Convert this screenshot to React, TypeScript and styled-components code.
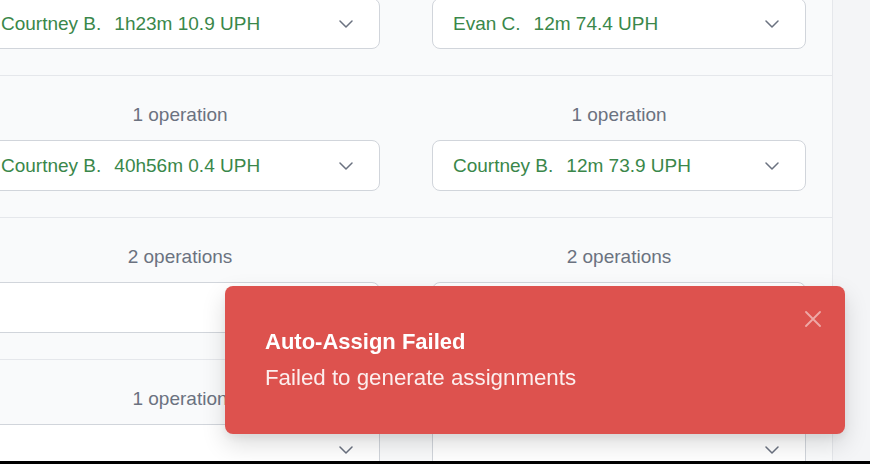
import React from "react";
import styled, { createGlobalStyle } from "styled-components";

const GlobalStyle = createGlobalStyle`
  html, body {
    margin: 0;
    padding: 0;
    overflow: hidden;
  }
  body {
    font-family: "Liberation Sans", Arial, Helvetica, sans-serif;
    -webkit-font-smoothing: antialiased;
  }
  * { box-sizing: border-box; }
`;

const Frame = styled.div`
  width: 870px;
  height: 464px;
  display: flex;
  flex-direction: column;
  overflow: hidden;
`;

const Viewport = styled.div`
  flex: 1;
  min-height: 0;
  overflow: hidden;
  background: #f4f5f7;
`;

const BottomEdge = styled.div`
  height: 3px;
  flex: none;
  background: #000;
`;

const Panel = styled.div`
  margin: -66px 0 0 -46px;
  width: 879px;
  background: #f9fafb;
  border-right: 1px solid #e5e7eb;
`;

const Row = styled.div`
  display: grid;
  grid-template-columns: 452px 426px;
  border-bottom: 1px solid #e5e7eb;
`;

const Cell = styled.div`
  display: flex;
  flex-direction: column;
  padding: 25px 26px 26px;
`;

const OpLabel = styled.div`
  text-align: center;
  font-size: 19px;
  height: 28px;
  line-height: 28px;
  color: #6b7280;
  margin-bottom: 11px;
  white-space: nowrap;
`;

const Select = styled.div`
  height: 51px;
  display: flex;
  align-items: center;
  justify-content: space-between;
  padding: 0 26px 0 20px;
  background: #fff;
  border: 1px solid #d1d5db;
  border-radius: 8px;
`;

const Assignee = styled.div`
  font-size: 19px;
  color: #3a874a;
  white-space: nowrap;
`;

const Stats = styled.span`
  margin-left: 13px;
`;

const Chevron = styled.svg`
  flex: none;
  width: 14px;
  height: 8px;
  color: #6b7280;
`;

const Toast = styled.div`
  position: fixed;
  right: 25px;
  bottom: 30px;
  width: 620px;
  height: 148px;
  padding: 41px 40px 40px;
  background: #dd524e;
  border-radius: 8px;
  box-shadow: 0 10px 25px rgba(0, 0, 0, 0.14), 0 4px 10px rgba(0, 0, 0, 0.06);
  color: #fff;
`;

const ToastTitle = styled.div`
  font-size: 22px;
  line-height: 29px;
  font-weight: 700;
  margin-bottom: 7px;
`;

const ToastMessage = styled.div`
  font-size: 22.3px;
  line-height: 30px;
  color: rgba(255, 255, 255, 0.9);
`;

const CloseButton = styled.button`
  position: absolute;
  top: 25px;
  right: 24px;
  width: 16px;
  height: 16px;
  padding: 0;
  border: 0;
  background: transparent;
  color: rgba(255, 255, 255, 0.5);
  display: flex;
  cursor: pointer;
`;

type Assignment = { name: string; time: string; uph: string } | null;

type RowData = {
  labels: [string, string];
  cells: [Assignment, Assignment];
};

const rows: RowData[] = [
  {
    labels: ["", ""],
    cells: [
      { name: "Courtney B.", time: "1h23m", uph: "10.9" },
      { name: "Evan C.", time: "12m", uph: "74.4" },
    ],
  },
  {
    labels: ["1 operation", "1 operation"],
    cells: [
      { name: "Courtney B.", time: "40h56m", uph: "0.4" },
      { name: "Courtney B.", time: "12m", uph: "73.9" },
    ],
  },
  {
    labels: ["2 operations", "2 operations"],
    cells: [null, null],
  },
  {
    labels: ["1 operation", "1 operation"],
    cells: [null, null],
  },
];

const ChevronIcon = () => (
  <Chevron viewBox="0 0 14 8" fill="none">
    <polyline
      points="1,1 7,7 13,1"
      stroke="currentColor"
      strokeWidth="1.5"
      strokeLinecap="round"
      strokeLinejoin="round"
    />
  </Chevron>
);

export default function App() {
  return (
    <>
      <GlobalStyle />
      <Frame>
        <Viewport>
          <Panel>
            {rows.map((row, i) => (
              <Row key={i}>
                {row.cells.map((cell, j) => (
                  <Cell key={j}>
                    <OpLabel>{row.labels[j]}</OpLabel>
                    <Select>
                      <Assignee>
                        {cell ? (
                          <>
                            {cell.name}
                            <Stats>
                              {cell.time} {cell.uph} UPH
                            </Stats>
                          </>
                        ) : null}
                      </Assignee>
                      <ChevronIcon />
                    </Select>
                  </Cell>
                ))}
              </Row>
            ))}
          </Panel>
        </Viewport>
        <BottomEdge />
      </Frame>
      <Toast role="alert">
        <CloseButton aria-label="Close">
          <svg width="16" height="16" viewBox="0 0 16 16" fill="none">
            <path d="M1 1L15 15M15 1L1 15" stroke="currentColor" strokeWidth="1.8" strokeLinecap="round" />
          </svg>
        </CloseButton>
        <ToastTitle>Auto-Assign Failed</ToastTitle>
        <ToastMessage>Failed to generate assignments</ToastMessage>
      </Toast>
    </>
  );
}
